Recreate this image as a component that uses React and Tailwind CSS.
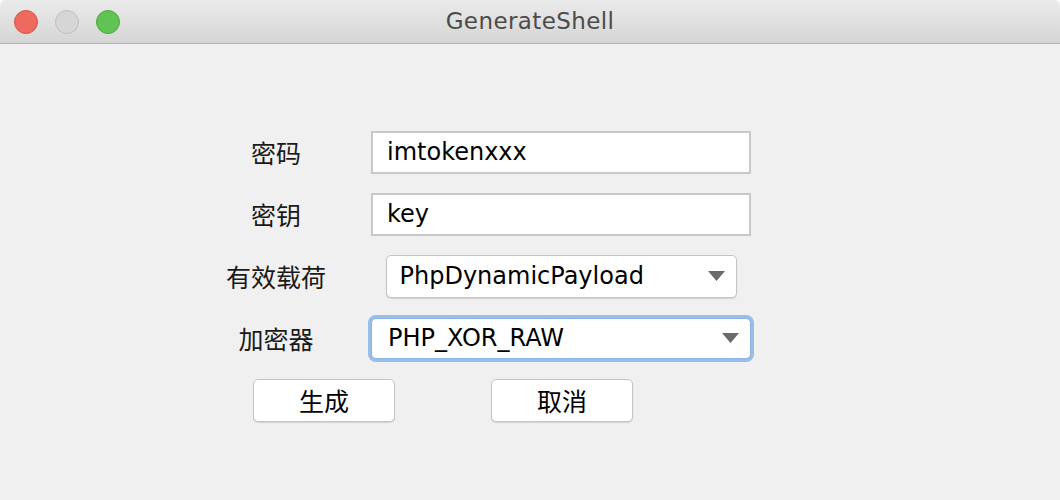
import React from 'react';

const cjk = { fontFamily: '"Noto Sans CJK SC", "Noto Sans", sans-serif' };

const Caret = () => (
	<svg width="17" height="10" viewBox="0 0 17 10" className="shrink-0">
		<path d="M0 0 L17 0 L8.5 10 Z" fill="#6a6a6a" />
	</svg>
);

const Label = ({ children }) => (
	<div className="text-[25px] text-[#1a1a1a] leading-none" style={cjk}>{children}</div>
);

const App = () => {
	return (
		<div className="w-[1060px] h-[500px] bg-[#f0f0f0] overflow-hidden rounded-t-[6px] font-['DejaVu_Sans',sans-serif]">
			{/* title bar */}
			<div className="relative h-[44px] bg-gradient-to-b from-[#ebebeb] to-[#d5d5d5] border-b border-[#b4b4b4] flex items-center justify-center">
				<div className="absolute left-[14px] top-[10px] flex gap-[17px]">
					<span className="w-[24px] h-[24px] rounded-full bg-[#ee6a5f] border border-[#d65449]" />
					<span className="w-[24px] h-[24px] rounded-full bg-[#d6d6d6] border border-[#bfbfbf]" />
					<span className="w-[24px] h-[24px] rounded-full bg-[#5fc454] border border-[#4ea843]" />
				</div>
				<span className="text-[23px] tracking-[0.4px] text-[#4b4b4b]">GenerateShell</span>
			</div>

			{/* form */}
			<div className="pt-[77px] pl-[200px]">
				<div className="grid grid-cols-[152px_418px] auto-rows-[62px] items-center justify-items-center">
					<Label>密码</Label>
					<div className="w-[380px] h-[43px] bg-white border-2 border-[#c8c8c8] flex items-center pl-[14px] text-[24px] text-black">
						imtokenxxx
					</div>

					<Label>密钥</Label>
					<div className="w-[380px] h-[43px] bg-white border-2 border-[#c8c8c8] flex items-center pl-[14px] text-[24px] text-black">
						key
					</div>

					<Label>有效载荷</Label>
					<div className="w-[351px] h-[43px] bg-white border border-[#c4c4c4] rounded-[5px] shadow-[0_1px_1px_rgba(0,0,0,0.12)] flex items-center justify-between pl-[13px] pr-[11px] text-[24px] text-black">
						<span>PhpDynamicPayload</span>
						<Caret />
					</div>

					<Label>加密器</Label>
					<div className="w-[380px] h-[41px] bg-white border border-[#8fb4e0] rounded-[5px] ring-[3px] ring-[#97bdea] flex items-center justify-between pl-[16px] pr-[11px] text-[24px] text-black">
						<span>PHP_XOR_RAW</span>
						<Caret />
					</div>
				</div>

				<div className="flex gap-[96px] ml-[53px] mt-[10px]">
					<button className="w-[142px] h-[43px] bg-white border border-[#c4c4c4] rounded-[5px] shadow-[0_1px_1px_rgba(0,0,0,0.12)] text-[25px] text-black" style={cjk}>
						生成
					</button>
					<button className="w-[142px] h-[43px] bg-white border border-[#c4c4c4] rounded-[5px] shadow-[0_1px_1px_rgba(0,0,0,0.12)] text-[25px] text-black" style={cjk}>
						取消
					</button>
				</div>
			</div>
		</div>
	);
};

export default App;
